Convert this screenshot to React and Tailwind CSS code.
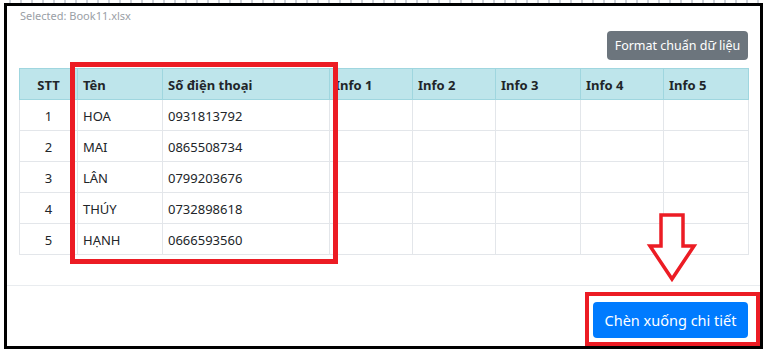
import React from "react"

const rows = [
  { stt: 1, ten: "HOA", sdt: "0931813792" },
  { stt: 2, ten: "MAI", sdt: "0865508734" },
  { stt: 3, ten: "LÂN", sdt: "0799203676" },
  { stt: 4, ten: "THÚY", sdt: "0732898618" },
  { stt: 5, ten: "HẠNH", sdt: "0666593560" },
]

const infoCols = ["Info 1", "Info 2", "Info 3", "Info 4", "Info 5"]

export default function App() {
  return (
    <div className="relative w-[768px] h-[356px] overflow-hidden bg-white font-['Segoe_UI','Noto_Sans',sans-serif] text-[#212529]">
      {/* dotted strip above the frame */}
      <div className="h-[3px] bg-[repeating-linear-gradient(90deg,transparent_0_9px,#cfd3da_9px_11px)]" />

      {/* modal frame */}
      <div className="ml-[4px] w-[759px] h-[346px] border-[3px] border-black flex flex-col">
        <div className="px-[12px] pb-[30px]">
          <div className="pt-[2px] pl-px text-[11px] leading-[16px] text-[#9aa0a6]">Selected: Book11.xlsx</div>

          <div className="flex justify-end mt-[7px] mb-[8px]">
            <button className="h-[29px] w-[141px] pt-px rounded bg-[#6c757d] text-white text-[12.5px] leading-none">
              Format chuẩn dữ liệu
            </button>
          </div>

          <table className="w-[729px] border-collapse table-fixed text-[13px]">
            <colgroup>
              <col className="w-[58px]" />
              <col className="w-[85px]" />
              <col className="w-[167px]" />
              <col className="w-[83px]" />
              <col className="w-[83px]" />
              <col className="w-[85px]" />
              <col className="w-[83px]" />
              <col className="w-[85px]" />
            </colgroup>
            <thead>
              <tr className="h-[31px] bg-[#bee5eb]">
                <th className="border border-[#9fd6df] pt-[3px] font-bold text-center">STT</th>
                <th className="border border-[#9fd6df] pt-[3px] font-bold text-left px-[5px]">Tên</th>
                <th className="border border-[#9fd6df] pt-[3px] font-bold text-left px-[5px]">Số điện thoại</th>
                {infoCols.map((c) => (
                  <th key={c} className="border border-[#9fd6df] pt-[3px] font-bold text-left px-[5px]">
                    {c}
                  </th>
                ))}
              </tr>
            </thead>
            <tbody>
              {rows.map((r) => (
                <tr key={r.stt} className="h-[31px]">
                  <td className="border border-[#e3e6ea] pt-[3px] text-center">{r.stt}</td>
                  <td className="border border-[#e3e6ea] pt-[3px] px-[5px]">{r.ten}</td>
                  <td className="border border-[#e3e6ea] pt-[3px] px-[5px]">{r.sdt}</td>
                  {infoCols.map((c) => (
                    <td key={c} className="border border-[#e3e6ea]" />
                  ))}
                </tr>
              ))}
            </tbody>
          </table>
        </div>

        <div className="border-t border-[#e9ecef] px-[12px] pt-[16px] flex justify-end">
          <button className="h-[36px] w-[155px] pt-px rounded bg-[#007bff] text-white text-[14.5px] leading-none">
            Chèn xuống chi tiết
          </button>
        </div>
      </div>

      {/* red annotations */}
      <div className="absolute left-[70px] top-[62px] w-[268px] h-[202px] border-[5px] border-[#ec1c24]" />
      <div className="absolute left-[585px] top-[292px] w-[175px] h-[54px] border-[4px] border-[#ec1c24]" />
      <svg className="absolute left-[646px] top-[212px]" width="52" height="72" viewBox="0 0 52 72">
        <polygon
          points="15,3 37,3 37,34 48,34 26,67 4,34 15,34"
          fill="white"
          stroke="#ec1c24"
          strokeWidth="3.5"
          strokeLinejoin="miter"
        />
      </svg>
    </div>
  )
}
